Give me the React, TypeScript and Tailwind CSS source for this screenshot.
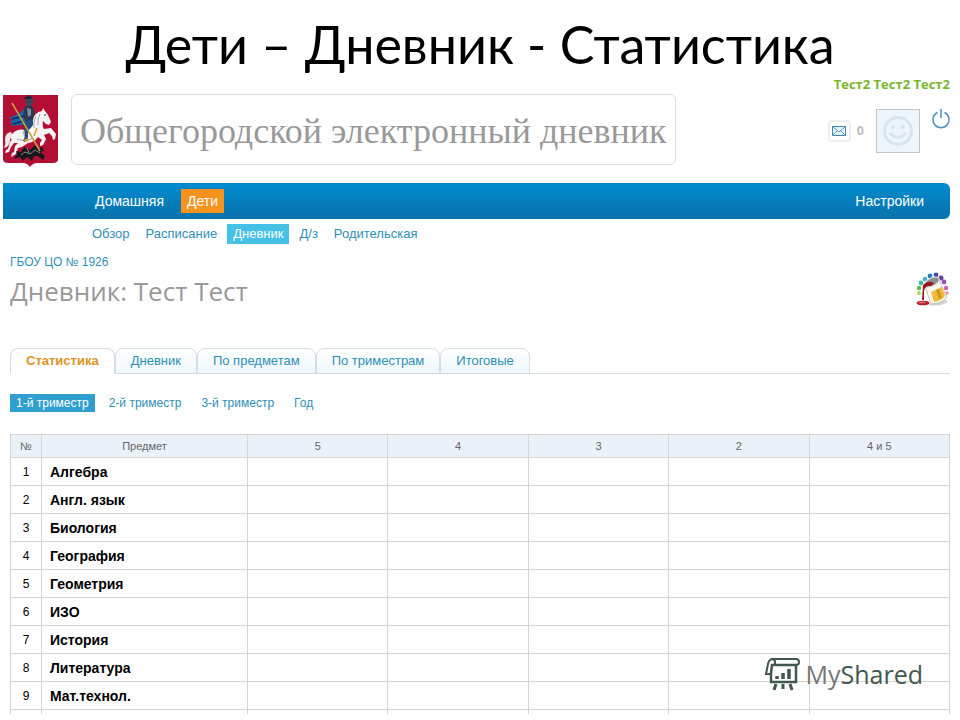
import React from 'react';
import clsx from 'clsx';

const subNav = ['Обзор', 'Расписание', 'Дневник', 'Д/з', 'Родительская'];
const tabs = ['Статистика', 'Дневник', 'По предметам', 'По триместрам', 'Итоговые'];
const periods = ['1-й триместр', '2-й триместр', '3-й триместр', 'Год'];
const marks = ['5', '4', '3', '2', '4 и 5'];
const subjects = [
  'Алгебра',
  'Англ. язык',
  'Биология',
  'География',
  'Геометрия',
  'ИЗО',
  'История',
  'Литература',
  'Мат.технол.'
];

const CoatOfArms = () => (
  <svg viewBox="0 0 56 75" className="h-[75px] w-14 shrink-0" aria-label="Герб Москвы">
    <path d="M0 1h55v64q0 4-5 4H34q-4 0-7 4-3-4-7-4H5q-5 0-5-4z" fill="#b30f35" />
    {/* хвост и задние ноги */}
    <path d="M8 38q-6 1-6 7 1 5-1 9 5-1 6-7 0-4 3-5z" fill="#efe9eb" />
    <path d="M12 42l10 1 3 6-6 4-4 1-2 6-5 3 1-4 2-1 1-6 3-3-4 0-3 4-2 5-4 1 1-3 2-1 2-7z" fill="#f3f0f1" />
    {/* туловище, шея и голова коня */}
    <path
      d="M10 39q5-5 12-3l6-2 2-10q3-6 9-7l1-3 2 3 3 4 3 7-2 3-3-1-3-3q-1 5 1 8l7-1 5 6-1 5-2 1-1-4-3-3-5 2 2 4-3 6-3 1 0-3 2-3-4-3q-4 6-12 6-8 1-13-1-4-4 0-9z"
      fill="#f6f3f4"
    />
    <path d="M33 22q-3 6-2 12M37 20q-3 6-2 11M14 45q8 3 16-1M20 37l2 7" fill="none" stroke="#aaa3ad" strokeWidth="1" />
    <circle cx="42" cy="21" r=".8" fill="#222" />
    {/* плащ */}
    <path d="M6 24l9-4 8-6 4 6-2 9-6 2-11 1 2-3-4-1 4-2z" fill="#1a64ad" />
    <path d="M9 25l12-3M10 30l11-3" stroke="#0c2c55" strokeWidth="1.500" />
    {/* всадник */}
    <path d="M22 6q2-4 6-3 3 2 2 6l-2 3-4 0z" fill="#3a4657" />
    <path d="M20 5l6-4 4 3-4 1z" fill="#1d2530" />
    <path d="M22 12l7 0 3 6-2 8-7 3-3-7z" fill="#2c394b" />
    <path d="M24 14l4 1 0 6-3 2z" fill="#7890ac" />
    <path d="M22 27l8-1 0 5-5 6 0 8-3 3-2-1 2-4-1-9z" fill="#234f7f" />
    <path d="M21 46l3-2 2 3-4 1z" fill="#d5a92f" />
    <path d="M31 42l3-8" fill="none" stroke="#d5a92f" strokeWidth="1.500" />
    {/* змей */}
    <path
      d="M13 57l5 1 3-5 6 3 5-5 3 4 4-2 2 4-4 1 5 4-2 4-5-4-4 0-2 5-5-4-4 4-3-4-6 2 3-5z"
      fill="#17181a"
    />
    <path d="M18 61l4-3 5 2 5-4 5 3M24 54l2 5" fill="none" stroke="#82858a" strokeWidth="1" />
    <path d="M9 9l28 48" stroke="#c6a23a" strokeWidth="1.500" />
  </svg>
);

const PaintCan = () => (
  <svg viewBox="0 0 34 36" className="h-9 w-[34px]" aria-hidden="true">
    <circle cx="9" cy="7" r="2.300" fill="#3fb0d8" />
    <circle cx="14" cy="4" r="2.400" fill="#2a78c6" />
    <circle cx="20" cy="3" r="2.400" fill="#4b46a8" />
    <circle cx="25" cy="6" r="2.500" fill="#65409f" />
    <circle cx="28" cy="10" r="2.400" fill="#9653bd" />
    <circle cx="30" cy="16" r="2.200" fill="#cf5cc0" />
    <circle cx="31" cy="21" r="1.800" fill="#f08cb5" />
    <circle cx="5" cy="11" r="2.400" fill="#3fb99a" />
    <circle cx="3" cy="16" r="2.200" fill="#57bd4e" />
    <circle cx="3" cy="21" r="1.900" fill="#a9da4c" />
    <path d="M12 33q12 2 20-3l-4-4z" fill="#d2d2d2" />
    <path d="M9 14L23 8l8 17q-5 7-16 7z" fill="#fbf8ef" stroke="#b9b5aa" strokeWidth=".8" />
    <path d="M15 20l11-5 3 9q-4 5-11 6z" fill="#efbb3a" />
    <path d="M20 18l3-1 3 9-3 1z" fill="#cf9620" />
    <ellipse cx="16" cy="10" rx="8" ry="4" transform="rotate(-25 16 10)" fill="#8f9094" stroke="#e6e6e6" strokeWidth="1" />
    <path d="M7 13q4-4 9-3l2 1-3 3-3 0-3 2-1 3 0 9H6z" fill="#9b1422" />
    <ellipse cx="7" cy="31" rx="6.500" ry="2.300" fill="#b3202c" />
    <ellipse cx="6" cy="30.500" rx="3.500" ry=".8" fill="#dd7777" />
  </svg>
);

const Watermark = () => (
  <div className="absolute right-[37px] bottom-7 flex items-center gap-[6px] text-[25px] leading-9">
    <svg viewBox="0 0 36 34" className="h-[34px] w-9" fill="none" stroke="#42574d" strokeWidth="2" aria-hidden="true">
      <path d="M12 8h20q3 0 3-3t-3-3H9Q5 2 4 7L2 17h4" fill="#fff" />
      <path d="M7 2q4 0 4 3v3" />
      <path d="M7 16v9h25V8H8z" fill="#fff" strokeWidth="2.500" />
      <path d="M12 27l-2 6M19 27v5M26 27l2 6" strokeWidth="3" />
      <path d="M13 22v-3M19 22v-6M25 22V12" strokeWidth="3.500" />
    </svg>
    <span className="font-['Open_Sans',sans-serif] font-medium">
      <span className="text-[#777]">My</span>
      <span className="text-[#42574d]">Shared</span>
    </span>
  </div>
);

const Header = () => (
  <header className="flex items-start pr-[10px] pl-[3px]">
    <div className="pt-[18px]">
      <CoatOfArms />
    </div>
    <div className="mt-[18px] ml-3 flex h-[71px] items-center rounded-md border border-[#ddd] px-2 pt-[2px] font-['Liberation_Serif',serif] text-[36px] text-[#999]">
      Общегородской электронный дневник
    </div>
    <div className="ml-auto">
      <p className="text-right font-['Open_Sans',sans-serif] text-[13px] leading-4 font-bold text-[#7ab52c]">
        Тест2 Тест2 Тест2
      </p>
      <div className="mt-[17px] flex items-start justify-end">
        <button type="button" aria-label="Сообщения" className="mt-[11px] flex h-[22px] w-[23px] items-center justify-center rounded border-2 border-[#eee]">
          <svg viewBox="0 0 14 10" className="h-[10px] w-[14px]" aria-hidden="true">
            <path d="M.5.5h13v9H.5z" fill="#e5f3fb" stroke="#3f86b5" />
            <path d="M1 1l6 5 6-5M1 9l4-4M13 9L9 5" fill="none" stroke="#5c9cc6" />
          </svg>
        </button>
        <span className="mt-[14px] ml-[6px] text-[13px] leading-4 font-bold text-[#bbb]">0</span>
        <div className="ml-3 flex size-11 items-center justify-center border border-[#c4c4c4] bg-[#edf4fa]">
          <svg viewBox="0 0 32 32" className="size-8" fill="none" stroke="#d7e4ee" strokeWidth="3" aria-hidden="true">
            <circle cx="16" cy="16" r="13.500" />
            <circle cx="11" cy="12" r="2" fill="#d7e4ee" stroke="none" />
            <circle cx="21" cy="12" r="2" fill="#d7e4ee" stroke="none" />
            <path d="M8 18q8 9 16 0" />
          </svg>
        </div>
        <button type="button" aria-label="Выход" className="ml-3">
          <svg viewBox="0 0 18 20" className="h-5 w-[18px]" fill="none" stroke="#4c93b8" strokeWidth="1.500" aria-hidden="true">
            <path d="M5.500 3.500a8 8 0 1 0 7 0M9 0v9" />
          </svg>
        </button>
      </div>
    </div>
  </header>
);

const StatsTable = () => (
  <table className="w-full table-fixed border-collapse">
    <colgroup>
      <col className="w-[31px]" />
      <col className="w-[206px]" />
      {marks.map((mark) => (
        <col key={mark} />
      ))}
    </colgroup>
    <thead>
      <tr className="h-[23px] bg-[#eaf1f9] text-[11px] text-[#666]">
        {['№', 'Предмет', ...marks].map((title) => (
          <th key={title} className="border border-[#d5d5d5] font-normal">
            {title}
          </th>
        ))}
      </tr>
    </thead>
    <tbody>
      {subjects.map((subject, i) => (
        <tr key={subject} className="h-7">
          <td className="border border-[#d5d5d5] text-center text-xs">{i + 1}</td>
          <td className="border border-[#d5d5d5] px-2 text-sm leading-5 font-bold">{subject}</td>
          {marks.map((mark) => (
            <td key={mark} className="border border-[#d5d5d5]" />
          ))}
        </tr>
      ))}
      {/* пустая строка, обрезанная снизу */}
      <tr className="h-7">
        {['num', 'subject', ...marks].map((cell) => (
          <td key={cell} className="border border-[#d5d5d5]" />
        ))}
      </tr>
    </tbody>
  </table>
);

export default function App() {
  return (
    <div className="relative h-screen overflow-hidden bg-white pb-[6px] font-['Liberation_Sans',sans-serif] text-black">
      <h1 className="h-[76px] pt-2 text-center font-['Lato',sans-serif] text-[52px] leading-[72px]">
        Дети – Дневник - Статистика
      </h1>
      <Header />
      <nav className="mt-[14px] mr-[10px] ml-[3px] flex h-9 items-center rounded-r-md bg-linear-to-b from-[#008dd0] to-[#0871aa] pl-[86px] text-sm text-white">
        <a href="#home" className="px-[6px]">Домашняя</a>
        <a href="#children" className="ml-[11px] bg-[#f6921e] px-[6px] leading-6">Дети</a>
        <a href="#settings" className="mr-[26px] ml-auto">Настройки</a>
      </nav>
      <nav className="mt-[5px] ml-[86px] flex gap-1 text-[13px] leading-5 text-[#2f8fb5]">
        {subNav.map((item) => (
          <a key={item} href="#diary" className={clsx('px-[6px]', item === 'Дневник' && 'bg-[#45c1e8] text-white')}>
            {item}
          </a>
        ))}
      </nav>
      <main className="mx-[10px] mt-2 h-[462px] overflow-hidden">
        <a href="#school" className="block text-xs leading-5 text-[#2f8fb5]">ГБОУ ЦО № 1926</a>
        <div className="flex items-start justify-between">
          <h2 className="font-['Open_Sans',sans-serif] text-[26px] leading-[38px] text-[#999]">Дневник: Тест Тест</h2>
          <button type="button" aria-label="Оформление">
            <PaintCan />
          </button>
        </div>
        <div role="tablist" className="mt-[38px] flex border-b border-[#d5dde2] text-[13px] text-[#2f8fb5]">
          {tabs.map((tab, i) => (
            <button
              key={tab}
              type="button"
              role="tab"
              aria-selected={i === 0}
              className={clsx(
                '-mb-px h-[26px] rounded-t-lg border px-[15px]',
                i === 0
                  ? 'border-[#d5dde2] border-b-white bg-white font-bold text-[#dd9325]'
                  : 'border-[#d5dde2] bg-linear-to-b from-white to-[#eef7fc]'
              )}
            >
              {tab}
            </button>
          ))}
        </div>
        <nav className="mt-5 mb-[22px] flex gap-2 text-xs leading-[18px] text-[#2f8fb5]">
          {periods.map((period, i) => (
            <a key={period} href="#period" className={clsx('px-[6px]', i === 0 && 'bg-[#2f9fd0] text-white')}>
              {period}
            </a>
          ))}
        </nav>
        <StatsTable />
      </main>
      <Watermark />
    </div>
  );
}
